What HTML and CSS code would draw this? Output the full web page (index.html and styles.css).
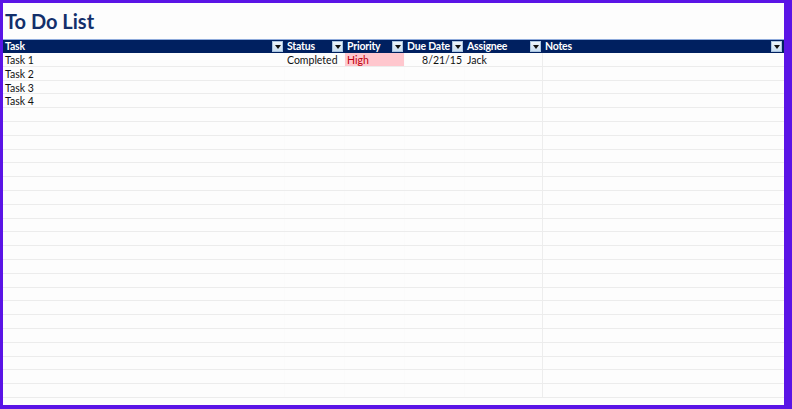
FILE: index.html
```html
<!DOCTYPE html>
<html>
<head>
<meta charset="utf-8">
<link rel="stylesheet" href="styles.css">
</head>
<body>
<div class="frame">
  <h1 class="title">To Do List</h1>
  <div class="sheet">
    <div class="row head">
      <div class="cell">Task<span class="dd"></span></div>
      <div class="cell">Status<span class="dd"></span></div>
      <div class="cell">Priority<span class="dd"></span></div>
      <div class="cell">Due Date<span class="dd"></span></div>
      <div class="cell">Assignee<span class="dd"></span></div>
      <div class="cell">Notes<span class="dd"></span></div>
    </div>
    <div class="row"><div class="cell">Task 1</div><div class="cell">Completed</div><div class="cell high">High</div><div class="cell num">8/21/15</div><div class="cell">Jack</div><div class="cell"></div></div>
    <div class="row"><div class="cell">Task 2</div><div class="cell"></div><div class="cell"></div><div class="cell"></div><div class="cell"></div><div class="cell"></div></div>
    <div class="row"><div class="cell">Task 3</div><div class="cell"></div><div class="cell"></div><div class="cell"></div><div class="cell"></div><div class="cell"></div></div>
    <div class="row"><div class="cell">Task 4</div><div class="cell"></div><div class="cell"></div><div class="cell"></div><div class="cell"></div><div class="cell"></div></div>
    <div class="row"><div class="cell"></div><div class="cell"></div><div class="cell"></div><div class="cell"></div><div class="cell"></div><div class="cell"></div></div>
    <div class="row"><div class="cell"></div><div class="cell"></div><div class="cell"></div><div class="cell"></div><div class="cell"></div><div class="cell"></div></div>
    <div class="row"><div class="cell"></div><div class="cell"></div><div class="cell"></div><div class="cell"></div><div class="cell"></div><div class="cell"></div></div>
    <div class="row"><div class="cell"></div><div class="cell"></div><div class="cell"></div><div class="cell"></div><div class="cell"></div><div class="cell"></div></div>
    <div class="row"><div class="cell"></div><div class="cell"></div><div class="cell"></div><div class="cell"></div><div class="cell"></div><div class="cell"></div></div>
    <div class="row"><div class="cell"></div><div class="cell"></div><div class="cell"></div><div class="cell"></div><div class="cell"></div><div class="cell"></div></div>
    <div class="row"><div class="cell"></div><div class="cell"></div><div class="cell"></div><div class="cell"></div><div class="cell"></div><div class="cell"></div></div>
    <div class="row"><div class="cell"></div><div class="cell"></div><div class="cell"></div><div class="cell"></div><div class="cell"></div><div class="cell"></div></div>
    <div class="row"><div class="cell"></div><div class="cell"></div><div class="cell"></div><div class="cell"></div><div class="cell"></div><div class="cell"></div></div>
    <div class="row"><div class="cell"></div><div class="cell"></div><div class="cell"></div><div class="cell"></div><div class="cell"></div><div class="cell"></div></div>
    <div class="row"><div class="cell"></div><div class="cell"></div><div class="cell"></div><div class="cell"></div><div class="cell"></div><div class="cell"></div></div>
    <div class="row"><div class="cell"></div><div class="cell"></div><div class="cell"></div><div class="cell"></div><div class="cell"></div><div class="cell"></div></div>
    <div class="row"><div class="cell"></div><div class="cell"></div><div class="cell"></div><div class="cell"></div><div class="cell"></div><div class="cell"></div></div>
    <div class="row"><div class="cell"></div><div class="cell"></div><div class="cell"></div><div class="cell"></div><div class="cell"></div><div class="cell"></div></div>
    <div class="row"><div class="cell"></div><div class="cell"></div><div class="cell"></div><div class="cell"></div><div class="cell"></div><div class="cell"></div></div>
    <div class="row"><div class="cell"></div><div class="cell"></div><div class="cell"></div><div class="cell"></div><div class="cell"></div><div class="cell"></div></div>
    <div class="row"><div class="cell"></div><div class="cell"></div><div class="cell"></div><div class="cell"></div><div class="cell"></div><div class="cell"></div></div>
    <div class="row"><div class="cell"></div><div class="cell"></div><div class="cell"></div><div class="cell"></div><div class="cell"></div><div class="cell"></div></div>
    <div class="row"><div class="cell"></div><div class="cell"></div><div class="cell"></div><div class="cell"></div><div class="cell"></div><div class="cell"></div></div>
    <div class="row"><div class="cell"></div><div class="cell"></div><div class="cell"></div><div class="cell"></div><div class="cell"></div><div class="cell"></div></div>
    <div class="row"><div class="cell"></div><div class="cell"></div><div class="cell"></div><div class="cell"></div><div class="cell"></div><div class="cell"></div></div>
  </div>
</div>
</body>
</html>
```
FILE: styles.css
```css
* { box-sizing: border-box; }
html, body { margin: 0; padding: 0; }
body { width: 792px; height: 409px; overflow: hidden; background: #5a14e6; }
.frame {
  width: 792px; height: 409px;
  border-style: solid; border-color: #5a14e6;
  border-width: 3px 8px 4px 3px;
  background: #fdfdfd;
  display: flex; flex-direction: column;
}
.title {
  margin: 0; height: 36px;
  padding: 6px 0 0 2px;
  font-family: "Lato", "Open Sans", sans-serif;
  font-weight: 700; font-size: 20px; line-height: 24px;
  color: #132f6b;
}
.sheet { display: flex; flex-direction: column; }
.row {
  display: grid;
  grid-template-columns: 282px 60px 60px 60px 78px 1fr;
  height: 13.8px;
  border-bottom: 1px solid #ececec;
  font-family: "Lato", sans-serif;
  font-size: 10.5px;
  line-height: 14px;
  color: #111;
}
.cell { padding: 0 2px; white-space: nowrap; overflow: hidden; position: relative; border-right: 1px solid #fbfbfb; }
.cell:nth-child(5) { border-right-color: #ededed; }
.cell:last-child { border-right: none; }
.row.head {
  height: 14px;
  background: #002060;
  border-top: 1px solid #8eaadb;
  border-bottom: none;
  color: #fff; font-weight: 700;
  line-height: 12px;
  letter-spacing: -0.2px;
}
.head .cell { border-right: none; }
.dd {
  position: absolute; right: 2px; top: 1px;
  width: 11px; height: 11px;
  background: linear-gradient(#eef5fb, #c9def2);
  border: 1px solid #a9c4e0;
}
.dd::after {
  content: ""; position: absolute; left: 2px; top: 3px;
  border-left: 3px solid transparent; border-right: 3px solid transparent;
  border-top: 4px solid #111;
}
.high { background: #ffc7ce; color: #c0000c; }
.num { text-align: right; }
```
